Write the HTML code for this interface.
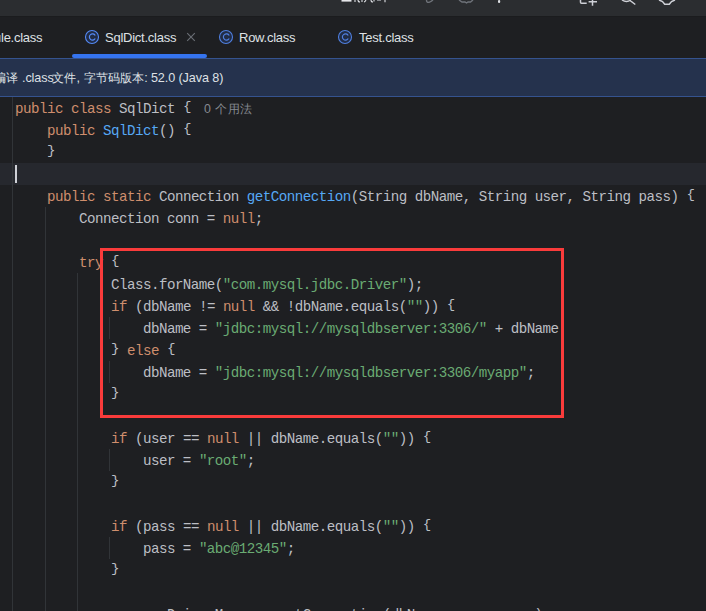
<!DOCTYPE html>
<html><head><meta charset="utf-8">
<style>
*{margin:0;padding:0;box-sizing:border-box}
html,body{width:706px;height:611px;overflow:hidden;background:#1e1f22}
body{position:relative;font-family:"Liberation Sans",sans-serif}
.abs{position:absolute}
#toolbar{left:0;top:0;width:706px;height:16px;background:#2b2d30}
#tbline{left:0;top:16px;width:706px;height:1px;background:#1b1c1e}
#tabs{left:0;top:17px;width:706px;height:41px;background:#1e1f22}
.tab{position:absolute;top:30px;font-size:13px;letter-spacing:-0.25px;line-height:16px;color:#dfe1e5;white-space:nowrap}
#uline{left:72px;top:54px;width:135px;height:4px;background:#3574f0;border-radius:2px}
#bnr{left:0;top:58px;width:706px;height:39px;background:#25324d;border-top:1px solid #35538f;border-bottom:1px solid #35538f}
.bt{position:absolute;top:69px;font-size:12.6px;line-height:18px;color:#dfe1e5;white-space:nowrap;letter-spacing:-0.1px}
.cj{font-size:12.1px;letter-spacing:0;font-weight:500}
#code{left:0;top:97px;width:706px;height:514px;overflow:hidden}
.ln{position:absolute;left:15px;margin-top:1.4px;height:22px;line-height:22px;font-family:"Liberation Mono",monospace;font-size:14.2px;letter-spacing:-0.52px;color:#bcbec4;white-space:pre}
.b{display:inline-block;transform:translateY(-2.5px) scaleY(0.92);transform-origin:50% 50%}
.k{color:#cf8e6d}.s{color:#6aab73}.m{color:#56a8f5}
.g{position:absolute;width:1px;background:#313438}
#cur{left:0;top:66px;width:706px;height:22px;background:#26282e}
#caret{left:15px;top:68px;width:2px;height:18px;background:#ced0d6}
.hint{position:absolute;font-size:12.4px;margin-top:1px;letter-spacing:0.45px;color:#868a91;line-height:22px;white-space:nowrap}
#box{left:100px;top:248px;width:464px;height:170px;border:3px solid #fa3b3b}
</style></head><body>
<div id="toolbar" class="abs"></div>
<div id="tbline" class="abs"></div>
<div id="tabs" class="abs"></div>
<!-- toolbar cut icons -->
<svg class="abs" style="left:0;top:0" width="706" height="16">
  <path d="M341.5 0.8H351.5" stroke="#e6e7ea" stroke-width="1.6"/>
  <g fill="none" stroke="#dfe1e5" stroke-width="1.1">
    <path d="M355 0v2M358 0q0 2 2 2M362 0v2M366 0q-1 2-2 2M371 0q0 2 2 2M374 0v1.5M377 0h4M385 0v2.2"/>
  </g>
  <g fill="none" stroke="#6f737a" stroke-width="1.4">
    <path d="M426.5 0q0 2.8 2.5 2.3q2-.6 4-2.3"/>
    <path d="M459 0l3 2h3l1.5 1l1.5-1h2.5l2.5-2"/>
  </g>
  <rect x="498" y="0" width="2.2" height="3" rx="1" fill="#dfe1e5"/>
  <g fill="none" stroke="#ced0d6" stroke-width="1.5">
    <path d="M580.5 0V2.2q0 1 1 1H586.7"/>
    <path d="M588.6 1.7H597M592.5 0V5.8"/>
    <path d="M622 0q4.5 3.2 8.8 0M630 0.5l5.3 4"/>
    <path d="M659 0l3.5 1.5l2.2 2.8h4.6l2.2-2.8l3.5-1.5"/>
  </g>
</svg>

<!-- tabs -->
<div class="tab" style="left:1px;">le.class</div><div class="abs" style="left:0;top:35px;width:1px;height:7px;background:#7a6550"></div>
<svg class="abs" style="left:84px;top:29px" width="16" height="16"><circle cx="8" cy="8" r="6.5" fill="#212c45" stroke="#548af7" stroke-width="1.1"/><path d="M11.2 6.5A3.1 3.1 0 1 0 11.2 9.5" fill="none" stroke="#548af7" stroke-width="1.2"/></svg>
<div class="tab" style="left:105px;">SqlDict.class</div>
<svg class="abs" style="left:185px;top:31px" width="12" height="12"><path d="M2.2 2.2L9.8 9.8M9.8 2.2L2.2 9.8" stroke="#6b6f76" stroke-width="1.1"/></svg>
<svg class="abs" style="left:218px;top:29px" width="16" height="16"><circle cx="8" cy="8" r="6.5" fill="#212c45" stroke="#4f7fdf" stroke-width="1.1"/><path d="M11.2 6.5A3.1 3.1 0 1 0 11.2 9.5" fill="none" stroke="#4f7fdf" stroke-width="1.2"/></svg>
<div class="tab" style="left:239px;">Row.class</div>
<svg class="abs" style="left:337px;top:29px" width="16" height="16"><circle cx="8" cy="8" r="6.5" fill="#212c45" stroke="#4f7fdf" stroke-width="1.1"/><path d="M11.2 6.5A3.1 3.1 0 1 0 11.2 9.5" fill="none" stroke="#4f7fdf" stroke-width="1.2"/></svg>
<div class="tab" style="left:359px;">Test.class</div>
<div id="uline" class="abs"></div>
<div id="bnr" class="abs"></div>
<div class="bt cj" style="left:-6.1px">编译</div>
<div class="bt" style="left:22px">.class</div>
<div class="bt cj" style="left:52px">文件</div>
<div class="bt" style="left:76.6px">,</div>
<div class="bt cj" style="left:83.5px">字节码版本</div>
<div class="bt" style="left:144.2px">:</div>
<div class="bt" style="left:150.9px;letter-spacing:-0.08px">52.0 (Java 8)</div>

<div id="code" class="abs">
  <div id="cur" class="abs"></div>
  <div class="g" style="left:12px;top:0;height:514px"></div>
  <div class="g" style="left:45px;top:110px;height:404px"></div>
  <div class="g" style="left:77px;top:176px;height:338px"></div>
  <div class="g" style="left:109px;top:220px;height:22px"></div>
  <div class="g" style="left:109px;top:264px;height:22px"></div>
  <div class="g" style="left:109px;top:352px;height:22px"></div>
  <div class="g" style="left:109px;top:440px;height:22px"></div>
  <div id="caret" class="abs"></div>

  <div class="ln" style="top:0"><span class="k">public class</span> SqlDict <span class="b">{</span></div>
  <div class="hint" style="left:204px;top:0">0 个用法</div>
  <div class="ln" style="top:22px">    <span class="k">public</span> <span class="m">SqlDict</span>() <span class="b">{</span></div>
  <div class="ln" style="top:44px">    <span class="b">}</span></div>
  <div class="ln" style="top:88px">    <span class="k">public static</span> Connection <span class="m">getConnection</span>(String dbName, String user, String pass) <span class="b">{</span></div>
  <div class="ln" style="top:110px">        Connection conn = <span class="k">null</span>;</div>
  <div class="ln" style="top:154px">        <span class="k">try</span> <span class="b">{</span></div>
  <div class="ln" style="top:176px">            Class.forName(<span class="s">"com.mysql.jdbc.Driver"</span>);</div>
  <div class="ln" style="top:198px">            <span class="k">if</span> (dbName != <span class="k">null</span> &amp;&amp; !dbName.equals(<span class="s">""</span>)) <span class="b">{</span></div>
  <div class="ln" style="top:220px">                dbName = <span class="s">"jdbc:mysql://mysqldbserver:3306/"</span> + dbName</div>
  <div class="ln" style="top:242px">            <span class="b">}</span> <span class="k">else</span> <span class="b">{</span></div>
  <div class="ln" style="top:264px">                dbName = <span class="s">"jdbc:mysql://mysqldbserver:3306/myapp"</span>;</div>
  <div class="ln" style="top:286px">            <span class="b">}</span></div>
  <div class="ln" style="top:330px">            <span class="k">if</span> (user == <span class="k">null</span> || dbName.equals(<span class="s">""</span>)) <span class="b">{</span></div>
  <div class="ln" style="top:352px">                user = <span class="s">"root"</span>;</div>
  <div class="ln" style="top:374px">            <span class="b">}</span></div>
  <div class="ln" style="top:418px">            <span class="k">if</span> (pass == <span class="k">null</span> || dbName.equals(<span class="s">""</span>)) <span class="b">{</span></div>
  <div class="ln" style="top:440px">                pass = <span class="s">"abc@12345"</span>;</div>
  <div class="ln" style="top:462px">            <span class="b">}</span></div>
  <div class="ln" style="top:506px">            conn = DriverManager.getConnection(dbName, user, pass);</div>
</div>
<div id="box" class="abs"></div>
</body></html>
